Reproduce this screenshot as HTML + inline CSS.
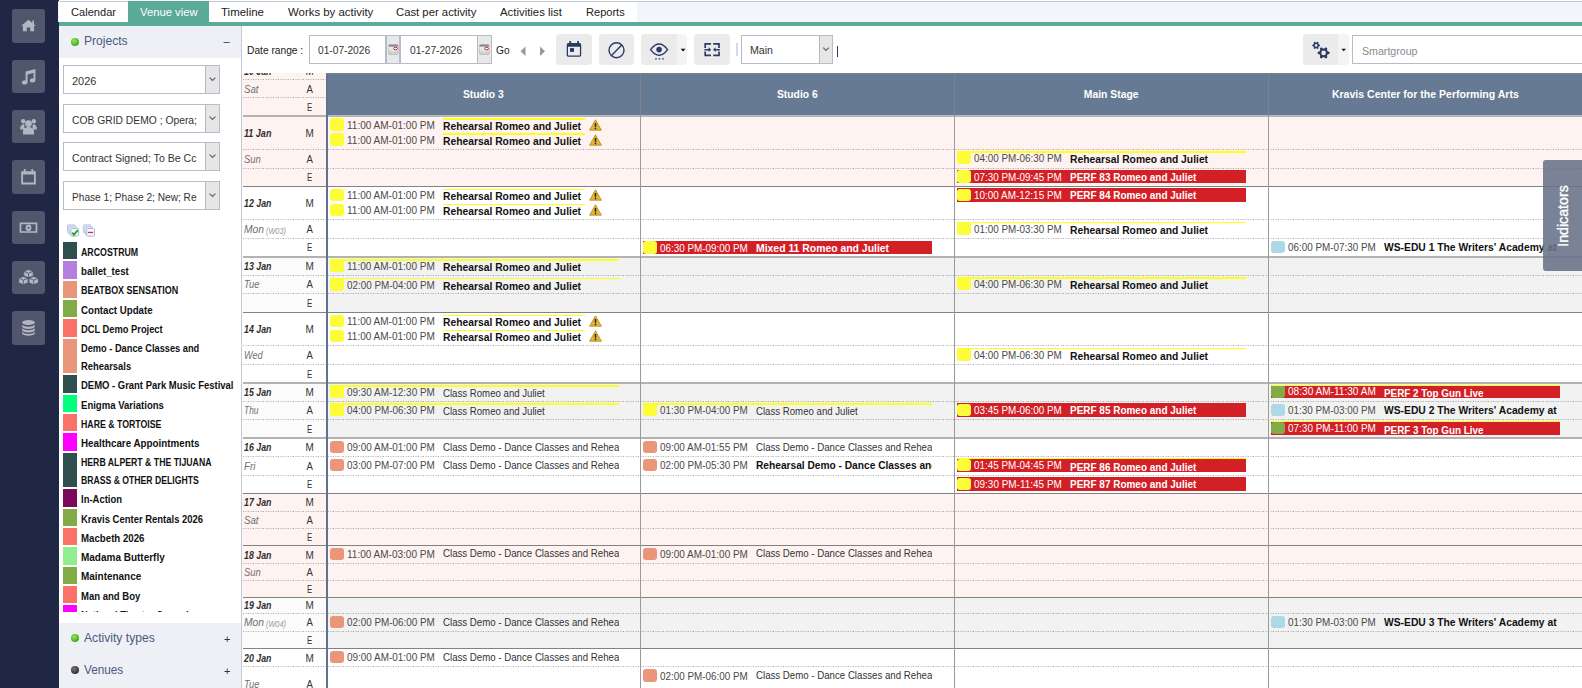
<!DOCTYPE html><html><head><meta charset="utf-8"><title>Venue view</title><style>
*{box-sizing:border-box;margin:0;padding:0}
html,body{width:1582px;height:688px;overflow:hidden;background:#fff}
body{font-family:"Liberation Sans",sans-serif;font-size:11px;color:#333;position:relative}
.abs{position:absolute}
.nav{left:0;top:0;width:58.7px;height:688px;background:#202744}
.nb{position:absolute;left:12px;width:33px;height:33.5px;background:#50566c;border-radius:3px}
.nb svg{position:absolute;left:0;top:0}
.tabbar{left:58px;top:1px;width:1524px;height:21px;background:#f2f5fa;border-top:1px solid #c3c9d6}
.tabs{left:59px;top:2px;width:578px;height:20px;background:#fff}
.tabline{left:59px;top:22px;width:1523px;height:3.5px;background:#5aab97}
.tab{position:absolute;top:2.3px;height:20px;line-height:20px;color:#222;white-space:nowrap}
.tab.on{background:#5aab97;color:#fff;top:1px;height:22px;line-height:22px}
.lp{left:59px;top:26px;width:182px;height:662px;background:#fff}
.lpb{left:241.4px;top:26px;width:1.1px;height:662px;background:#c3cad8}
.ph{position:absolute;left:59px;width:182px;background:#eef0f5}
.pt{position:absolute;left:84.4px;color:#4a5a7e;white-space:nowrap}
.dot{position:absolute;left:70.5px;width:8px;height:8px;border-radius:50%}
.pm{position:absolute;left:224px;font-size:11px;color:#333}
.dd{position:absolute;left:63px;width:156.5px;height:29px;border:1px solid #b5bccb;background:#fff}
.dd .t{position:absolute;left:8.3px;top:1.7px;line-height:27px;color:#333;white-space:nowrap;overflow:hidden;width:126px}
.dd .a{position:absolute;right:0;top:0;width:14px;height:27px;background:#e6e6e6;border-left:1px solid #b9b9b9}
.sw{position:absolute;left:63px;width:14px}
.pl{position:absolute;left:81.4px;color:#111;white-space:nowrap;line-height:17.5px}
.ln{position:absolute;height:1px}
.dl{left:243px;width:1339px;background:linear-gradient(90deg,rgba(0,0,0,.30) 0 1px,transparent 1px 2px,rgba(0,0,0,.15) 2px 4px,rgba(0,0,0,.09) 4px 5px);background-size:5px 1px}
.dt{position:absolute;left:243.8px;white-space:nowrap;line-height:13px}
.mae{position:absolute;left:300px;width:20px;text-align:center;font-size:9.8px;color:#333;line-height:13px}
.hd{left:326px;top:73px;width:1256px;height:42.5px;background:#667a93}
.ht{position:absolute;top:73px;height:42px;line-height:43px;text-align:center;width:314px;color:#fff;white-space:nowrap}
.ev{position:absolute;width:288.5px;height:14px;white-space:nowrap;overflow:hidden}
.ev .s{position:absolute;left:0;top:0;width:14px;height:12.4px;border-radius:3px}
.ev .tm{position:absolute;left:17px;line-height:13px;color:#4a4a4a}
.ev .ti{position:absolute;left:113px;line-height:13px;color:#333}
.ev.b .ti{color:#111}
.ev.r .tm,.ev.r .ti{color:#fff}
.rb{position:absolute;width:288.5px;height:13.3px;background:#d32027}
.yl{position:absolute;height:1.7px;background:#ffff1e}
.tb{position:absolute;top:34.2px;height:30.5px;background:#ebebeb;border-radius:4px}
.inp{position:absolute;top:35px;height:29px;border:1px solid #b5bccb;background:#fff;line-height:29.5px;color:#333;white-space:nowrap}
.t11{position:absolute;color:#222;white-space:nowrap;line-height:13px}
</style></head><body>
<div class="abs nav"></div>
<div class="nb" style="top:9.3px"><svg width="33" height="33.5" viewBox="0 0 33 33.5"><g transform="translate(16.5 16.75) scale(1) translate(-16.5 -16.75)"><path d="M16.5 10.8 L9.2 16.8 L10.9 16.8 L10.9 22.3 L14.8 22.3 L14.8 18.6 L18.2 18.6 L18.2 22.3 L22.1 22.3 L22.1 16.8 L23.8 16.8 L22 15.3 L22 11.6 L20.3 11.6 L20.3 13.9 Z" fill="#b2b6c2"/></g></svg></div>
<div class="nb" style="top:59.6px"><svg width="33" height="33.5" viewBox="0 0 33 33.5"><g transform="translate(16.5 16.75) scale(1) translate(-16.5 -16.75)"><path d="M13.6 11.4 L23.4 9 L23.4 20.4 A2.8 2.1 0 1 1 21.5 18.4 L21.5 13 L15.5 14.5 L15.5 22.4 A2.8 2.1 0 1 1 13.6 20.4 Z" fill="#b2b6c2"/></g></svg></div>
<div class="nb" style="top:109.9px"><svg width="33" height="33.5" viewBox="0 0 33 33.5"><g transform="translate(16.5 16.75) scale(1) translate(-16.5 -16.75)"><g fill="#b2b6c2"><circle cx="11.2" cy="11.3" r="2.2"/><circle cx="21.8" cy="11.3" r="2.2"/><circle cx="16.5" cy="13.6" r="3.4"/><path d="M8.2 19.5 A3.2 4.2 0 0 1 12.4 14.6 L12.4 19.5 Z"/><path d="M24.8 19.5 A3.2 4.2 0 0 0 20.6 14.6 L20.6 19.5 Z"/><path d="M11 24.6 L11 21 A5.5 4 0 0 1 22 21 L22 24.6 Z"/></g></g></svg></div>
<div class="nb" style="top:160.2px"><svg width="33" height="33.5" viewBox="0 0 33 33.5"><g transform="translate(16.5 16.75) scale(1.16) translate(-16.5 -16.75)"><path d="M10.2 12 H22.8 V23.4 H10.2 Z M11.8 14.8 V21.8 H21.2 V14.8 Z M12.4 10 h1.6 v2 h-1.6 Z M19 10 h1.6 v2 h-1.6 Z" fill="#b2b6c2" fill-rule="evenodd"/></g></svg></div>
<div class="nb" style="top:210.5px"><svg width="33" height="33.5" viewBox="0 0 33 33.5"><g transform="translate(16.5 16.75) scale(1.15) translate(-16.5 -16.75)"><path d="M8.8 12.2 H24.2 V21.2 H8.8 Z M10.3 13.7 V19.7 H22.7 V13.7 Z" fill="#b2b6c2" fill-rule="evenodd"/><ellipse cx="16.5" cy="16.7" rx="2.5" ry="2.8" fill="#b2b6c2"/><circle cx="16.5" cy="16.7" r="0.9" fill="#4c5269"/></g></svg></div>
<div class="nb" style="top:260.8px"><svg width="33" height="33.5" viewBox="0 0 33 33.5"><g transform="translate(16.5 16.75) scale(1.15) translate(-16.5 -16.75)"><g fill="#b2b6c2" stroke="#4c5269" stroke-width="0.7"><path d="M16.5 9.6 L20.6 11.2 L20.6 15.2 L16.5 16.8 L12.4 15.2 L12.4 11.2 Z"/><path d="M12 15.6 L16.1 17.2 L16.1 21.2 L12 22.8 L7.9 21.2 L7.9 17.2 Z"/><path d="M21 15.6 L25.1 17.2 L25.1 21.2 L21 22.8 L16.9 21.2 L16.9 17.2 Z"/><path d="M12.4 11.2 L16.5 12.8 L20.6 11.2 M16.5 12.8 V16.8 M7.9 17.2 L12 18.8 L16.1 17.2 M12 18.8 V22.8 M16.9 17.2 L21 18.8 L25.1 17.2 M21 18.8 V22.8" fill="none"/></g></g></svg></div>
<div class="nb" style="top:311.1px"><svg width="33" height="33.5" viewBox="0 0 33 33.5"><g transform="translate(16.5 16.75) scale(1.05) translate(-16.5 -16.75)"><g fill="#b2b6c2"><ellipse cx="16.5" cy="11.8" rx="6" ry="2.4"/><path d="M10.5 13.4 A6 2.4 0 0 0 22.5 13.4 V15.5 A6 2.4 0 0 1 10.5 15.5 Z"/><path d="M10.5 16.8 A6 2.4 0 0 0 22.5 16.8 V18.9 A6 2.4 0 0 1 10.5 18.9 Z"/><path d="M10.5 20.2 A6 2.4 0 0 0 22.5 20.2 V22 A6 2.4 0 0 1 10.5 22 Z"/></g></g></svg></div>
<div class="abs tabbar"></div><div class="abs tabs"></div>
<div class="tab" style="left:71.3px"><span style="display:inline-block;white-space:pre;font-size:11.2px;transform-origin:left center;transform:scaleX(0.991)">Calendar</span></div>
<div class="tab on" style="left:128.2px;width:80.8px"></div><div class="tab" style="left:140.3px;color:#fff"><span style="display:inline-block;white-space:pre;font-size:11.2px;transform-origin:left center;transform:scaleX(1.008)">Venue view</span></div>
<div class="tab" style="left:221.2px"><span style="display:inline-block;white-space:pre;font-size:11.2px;transform-origin:left center;transform:scaleX(1.027)">Timeline</span></div>
<div class="tab" style="left:287.7px"><span style="display:inline-block;white-space:pre;font-size:11.2px;transform-origin:left center;transform:scaleX(1.019)">Works by activity</span></div>
<div class="tab" style="left:396px"><span style="display:inline-block;white-space:pre;font-size:11.2px;transform-origin:left center;transform:scaleX(1.010)">Cast per activity</span></div>
<div class="tab" style="left:500.4px"><span style="display:inline-block;white-space:pre;font-size:11.2px;transform-origin:left center;transform:scaleX(1.016)">Activities list</span></div>
<div class="tab" style="left:586.3px"><span style="display:inline-block;white-space:pre;font-size:11.2px;transform-origin:left center;transform:scaleX(0.988)">Reports</span></div>
<div class="abs tabline"></div>
<div class="abs lp"></div><div class="abs lpb"></div>
<div class="ph" style="top:26px;height:31.5px"></div>
<div class="dot" style="top:37.7px;background:radial-gradient(circle at 40% 35%,#9be35a,#3fae1c 70%)"></div>
<div class="pt" style="top:34px"><span style="display:inline-block;white-space:pre;font-size:12.4px;transform-origin:left center;transform:scaleX(0.974)">Projects</span></div>
<div class="pm" style="top:35px;left:223.5px">&#8211;</div>
<div class="dd" style="top:65px"><div class="t"><span style="display:inline-block;white-space:pre;font-size:10.9px;transform-origin:left center;transform:scaleX(1.003)">2026</span></div><div class="a"><svg width="13" height="26" viewBox="0 0 13 26"><path d="M3.6 11.6 L6.5 14.4 L9.4 11.6" fill="none" stroke="#666" stroke-width="1.3"/></svg></div></div>
<div class="dd" style="top:104px"><div class="t"><span style="display:inline-block;white-space:pre;font-size:10.9px;transform-origin:left center;transform:scaleX(0.947)">COB GRID DEMO ; Opera;</span></div><div class="a"><svg width="13" height="26" viewBox="0 0 13 26"><path d="M3.6 11.6 L6.5 14.4 L9.4 11.6" fill="none" stroke="#666" stroke-width="1.3"/></svg></div></div>
<div class="dd" style="top:142px"><div class="t"><span style="display:inline-block;white-space:pre;font-size:10.9px;transform-origin:left center;transform:scaleX(0.972)">Contract Signed; To Be Cc</span></div><div class="a"><svg width="13" height="26" viewBox="0 0 13 26"><path d="M3.6 11.6 L6.5 14.4 L9.4 11.6" fill="none" stroke="#666" stroke-width="1.3"/></svg></div></div>
<div class="dd" style="top:181px"><div class="t"><span style="display:inline-block;white-space:pre;font-size:10.9px;transform-origin:left center;transform:scaleX(0.931)">Phase 1; Phase 2; New; Re</span></div><div class="a"><svg width="13" height="26" viewBox="0 0 13 26"><path d="M3.6 11.6 L6.5 14.4 L9.4 11.6" fill="none" stroke="#666" stroke-width="1.3"/></svg></div></div>
<svg class="abs" style="left:66px;top:224px" width="32" height="14" viewBox="0 0 32 14"><rect x="1.4" y="0.8" width="7.6" height="7.8" rx="0.8" fill="#dfe7f5" stroke="#b3c5e3" stroke-width="0.9"/><rect x="3" y="2.6" width="7.6" height="7.8" rx="0.8" fill="#e6edf8" stroke="#b3c5e3" stroke-width="0.9"/><rect x="4.8" y="4.5" width="7.7" height="7.6" rx="0.8" fill="#fbfcfe" stroke="#9fb6dc" stroke-width="1"/><path d="M6.2 8.6 L8 10.8 L11.8 6.2" fill="none" stroke="#25a325" stroke-width="1.9"/><rect x="17.3" y="0.8" width="7.6" height="7.8" rx="0.8" fill="#dfe7f5" stroke="#b3c5e3" stroke-width="0.9"/><rect x="18.9" y="2.6" width="7.6" height="7.8" rx="0.8" fill="#e6edf8" stroke="#b3c5e3" stroke-width="0.9"/><rect x="20.7" y="4.5" width="7.7" height="7.6" rx="0.8" fill="#fbfcfe" stroke="#9fb6dc" stroke-width="1"/><rect x="21.9" y="7.8" width="5.2" height="1.3" fill="#e0202c"/></svg>
<div class="abs" style="left:59px;top:240px;width:182px;height:371.8px;overflow:hidden"><div style="position:absolute;left:-59px;top:-240px">
<div class="sw" style="top:242.1px;height:17.4px;background:#2f4f4f"></div>
<div class="pl" style="top:243.9px"><span style="display:inline-block;white-space:pre;font-size:10px;font-weight:bold;transform-origin:left center;transform:scaleX(0.880)">ARCOSTRUM</span></div>
<div class="sw" style="top:261.4px;height:17.4px;background:#b47fe0"></div>
<div class="pl" style="top:263.2px"><span style="display:inline-block;white-space:pre;font-size:10px;font-weight:bold;transform-origin:left center;transform:scaleX(0.966)">ballet_test</span></div>
<div class="sw" style="top:280.7px;height:17.4px;background:#e9967a"></div>
<div class="pl" style="top:282.4px"><span style="display:inline-block;white-space:pre;font-size:10px;font-weight:bold;transform-origin:left center;transform:scaleX(0.895)">BEATBOX SENSATION</span></div>
<div class="sw" style="top:300.0px;height:17.4px;background:#82aa46"></div>
<div class="pl" style="top:301.8px"><span style="display:inline-block;white-space:pre;font-size:10px;font-weight:bold;transform-origin:left center;transform:scaleX(0.969)">Contact Update</span></div>
<div class="sw" style="top:319.3px;height:17.4px;background:#fa7268"></div>
<div class="pl" style="top:321.1px"><span style="display:inline-block;white-space:pre;font-size:10px;font-weight:bold;transform-origin:left center;transform:scaleX(0.932)">DCL Demo Project</span></div>
<div class="sw" style="top:338.6px;height:34.9px;background:#e9967a"></div>
<div class="pl" style="top:340.4px"><span style="display:inline-block;white-space:pre;font-size:10px;font-weight:bold;transform-origin:left center;transform:scaleX(0.925)">Demo - Dance Classes and</span><br><span style="display:inline-block;white-space:pre;font-size:10px;font-weight:bold;transform-origin:left center;transform:scaleX(0.939)">Rehearsals</span></div>
<div class="sw" style="top:375.4px;height:17.4px;background:#2f4f4f"></div>
<div class="pl" style="top:377.2px"><span style="display:inline-block;white-space:pre;font-size:10px;font-weight:bold;transform-origin:left center;transform:scaleX(0.946)">DEMO - Grant Park Music Festival</span></div>
<div class="sw" style="top:394.7px;height:17.4px;background:#00ff7f"></div>
<div class="pl" style="top:396.5px"><span style="display:inline-block;white-space:pre;font-size:10px;font-weight:bold;transform-origin:left center;transform:scaleX(0.956)">Enigma Variations</span></div>
<div class="sw" style="top:414.0px;height:17.4px;background:#fa7268"></div>
<div class="pl" style="top:415.8px"><span style="display:inline-block;white-space:pre;font-size:10px;font-weight:bold;transform-origin:left center;transform:scaleX(0.875)">HARE &amp; TORTOISE</span></div>
<div class="sw" style="top:433.3px;height:17.4px;background:#ff00ff"></div>
<div class="pl" style="top:435.1px"><span style="display:inline-block;white-space:pre;font-size:10px;font-weight:bold;transform-origin:left center;transform:scaleX(0.980)">Healthcare Appointments</span></div>
<div class="sw" style="top:452.6px;height:34.9px;background:#2f4f4f"></div>
<div class="pl" style="top:454.4px"><span style="display:inline-block;white-space:pre;font-size:10px;font-weight:bold;transform-origin:left center;transform:scaleX(0.872)">HERB ALPERT &amp; THE TIJUANA</span><br><span style="display:inline-block;white-space:pre;font-size:10px;font-weight:bold;transform-origin:left center;transform:scaleX(0.865)">BRASS &amp; OTHER DELIGHTS</span></div>
<div class="sw" style="top:489.4px;height:17.4px;background:#7b0a5c"></div>
<div class="pl" style="top:491.2px"><span style="display:inline-block;white-space:pre;font-size:10px;font-weight:bold;transform-origin:left center;transform:scaleX(0.946)">In-Action</span></div>
<div class="sw" style="top:508.7px;height:17.4px;background:#82aa46"></div>
<div class="pl" style="top:510.5px"><span style="display:inline-block;white-space:pre;font-size:10px;font-weight:bold;transform-origin:left center;transform:scaleX(0.947)">Kravis Center Rentals 2026</span></div>
<div class="sw" style="top:528.0px;height:17.4px;background:#fa7268"></div>
<div class="pl" style="top:529.8px"><span style="display:inline-block;white-space:pre;font-size:10px;font-weight:bold;transform-origin:left center;transform:scaleX(0.968)">Macbeth 2026</span></div>
<div class="sw" style="top:547.3px;height:17.4px;background:#90ee90"></div>
<div class="pl" style="top:549.0px"><span style="display:inline-block;white-space:pre;font-size:10px;font-weight:bold;transform-origin:left center;transform:scaleX(0.998)">Madama Butterfly</span></div>
<div class="sw" style="top:566.6px;height:17.4px;background:#82aa46"></div>
<div class="pl" style="top:568.3px"><span style="display:inline-block;white-space:pre;font-size:10px;font-weight:bold;transform-origin:left center;transform:scaleX(0.994)">Maintenance</span></div>
<div class="sw" style="top:585.9px;height:17.4px;background:#fa7268"></div>
<div class="pl" style="top:587.6px"><span style="display:inline-block;white-space:pre;font-size:10px;font-weight:bold;transform-origin:left center;transform:scaleX(0.954)">Man and Boy</span></div>
<div class="sw" style="top:605.2px;height:17.4px;background:#ff00ff"></div>
<div class="pl" style="top:606.9px"><span style="display:inline-block;white-space:pre;font-size:10px;font-weight:bold;transform-origin:left center;transform:scaleX(0.927)">National Theatre Greenday</span></div>
</div></div>
<div class="ph" style="top:622.7px;height:66px"></div>
<div class="dot" style="top:634.3px;background:radial-gradient(circle at 40% 35%,#9be35a,#3fae1c 70%)"></div>
<div class="pt" style="top:630.6px"><span style="display:inline-block;white-space:pre;font-size:12.4px;transform-origin:left center;transform:scaleX(0.979)">Activity types</span></div>
<div class="pm" style="top:632.5px">+</div>
<div class="dot" style="top:666.3px;background:radial-gradient(circle at 40% 35%,#777,#333 70%)"></div>
<div class="pt" style="top:663.2px"><span style="display:inline-block;white-space:pre;font-size:12.4px;transform-origin:left center;transform:scaleX(0.948)">Venues</span></div>
<div class="pm" style="top:664.5px">+</div>
<div class="t11" style="left:246.5px;top:44px"><span style="display:inline-block;white-space:pre;font-size:10.8px;transform-origin:left center;transform:scaleX(0.946)">Date range :</span></div>
<div class="inp" style="left:308.5px;width:77.5px;padding-left:8.2px"><span style="display:inline-block;white-space:pre;font-size:10.8px;transform-origin:left center;transform:scaleX(0.943)">01-07-2026</span></div><div class="abs" style="left:385.5px;top:35px;width:14.5px;height:29px;background:#e8e8e8;border:1px solid #b5bccb;border-left:1px solid #b9b9b9"></div><svg class="abs" style="left:387.5px;top:44px" width="11" height="11" viewBox="0 0 11 11"><defs><linearGradient id="cg385" x1="0" y1="0" x2="0" y2="1"><stop offset="0" stop-color="#fff"/><stop offset="1" stop-color="#c4c4c4"/></linearGradient></defs><rect x="0.3" y="0.5" width="10" height="10" rx="1.5" fill="url(#cg385)" stroke="#b5b5b5" stroke-width="0.6"/><path d="M0.6 1.6 Q0.6 0.5 1.8 0.5 H8.8 Q10 0.5 10 1.6 V2.8 H0.6 Z" fill="#8d8d8d"/><path d="M1 6.2 H9.6 M5 3.2 V10" stroke="#e6e6e6" stroke-width="0.8"/><ellipse cx="7.6" cy="4.5" rx="1.9" ry="1.25" fill="#fff" stroke="#c8222a" stroke-width="1"/></svg>
<div class="inp" style="left:400px;width:77.5px;padding-left:8.7px"><span style="display:inline-block;white-space:pre;font-size:10.8px;transform-origin:left center;transform:scaleX(0.943)">01-27-2026</span></div><div class="abs" style="left:477px;top:35px;width:14.5px;height:29px;background:#e8e8e8;border:1px solid #b5bccb;border-left:1px solid #b9b9b9"></div><svg class="abs" style="left:479px;top:44px" width="11" height="11" viewBox="0 0 11 11"><defs><linearGradient id="cg477" x1="0" y1="0" x2="0" y2="1"><stop offset="0" stop-color="#fff"/><stop offset="1" stop-color="#c4c4c4"/></linearGradient></defs><rect x="0.3" y="0.5" width="10" height="10" rx="1.5" fill="url(#cg477)" stroke="#b5b5b5" stroke-width="0.6"/><path d="M0.6 1.6 Q0.6 0.5 1.8 0.5 H8.8 Q10 0.5 10 1.6 V2.8 H0.6 Z" fill="#8d8d8d"/><path d="M1 6.2 H9.6 M5 3.2 V10" stroke="#e6e6e6" stroke-width="0.8"/><ellipse cx="7.6" cy="4.5" rx="1.9" ry="1.25" fill="#fff" stroke="#c8222a" stroke-width="1"/></svg>
<div class="t11" style="left:495.6px;top:43.7px"><span style="display:inline-block;white-space:pre;font-size:10.8px;transform-origin:left center;transform:scaleX(0.944)">Go</span></div>
<svg class="abs" style="left:518px;top:44px" width="32" height="14" viewBox="0 0 32 14"><path d="M7.5 2.5 L2.5 7.3 L7.5 12 Z M22 2.5 L27 7.3 L22 12 Z" fill="#9a9a9a"/></svg>
<div class="tb" style="left:556px;width:35.6px"></div>
<svg class="abs" style="left:565px;top:40px" width="18" height="18" viewBox="0 0 18 18"><rect x="2.35" y="3.75" width="13.2" height="12.4" rx="1.2" fill="none" stroke="#2e3a66" stroke-width="1.3"/><rect x="2.35" y="3.75" width="13.2" height="3" fill="#2e3a66"/><rect x="4.3" y="1" width="1.8" height="3" fill="#2e3a66"/><rect x="12.2" y="1" width="1.8" height="3" fill="#2e3a66"/><rect x="5" y="8.1" width="4" height="3.8" fill="#2e3a66"/></svg>
<div class="tb" style="left:598.7px;width:35.4px"></div>
<svg class="abs" style="left:607px;top:40.5px" width="19" height="19" viewBox="0 0 19 19"><circle cx="9.5" cy="9.3" r="7.5" fill="none" stroke="#2e3a66" stroke-width="1.4"/><path d="M4.3 14.7 L14.7 3.9" stroke="#2e3a66" stroke-width="1.4"/></svg>
<div class="tb" style="left:641.2px;width:45.5px;background:#f4f4f4"></div><div class="tb" style="left:641.2px;width:35.7px;border-radius:4px 0 0 4px"></div>
<svg class="abs" style="left:648px;top:40px" width="22" height="21" viewBox="0 0 22 21"><path d="M2.6 9.6 Q11.1 -1.6 19.6 9.6 Q11.1 20.8 2.6 9.6 Z" fill="none" stroke="#2e3a66" stroke-width="1.4"/><circle cx="11.1" cy="9.6" r="2.8" fill="#2e3a66"/><path d="M7.2 18.9 h1.6 M10.7 18.9 h1.6 M14.2 18.9 h1.6" stroke="#2e3a66" stroke-width="1.3"/></svg>
<svg class="abs" style="left:679.5px;top:47.8px" width="7" height="5" viewBox="0 0 7 5"><path d="M0.6 0.7 H5.6 L3.1 3.4 Z" fill="#111"/></svg>
<div class="tb" style="left:694px;width:35.7px"></div>
<svg class="abs" style="left:703px;top:41px" width="18" height="18" viewBox="0 0 18 18"><path d="M8 2.9 H2.2 V7 M10.2 2.9 H16 V7 M8 14.3 H2.2 V10.4 M10.2 14.3 H16 V10.4" fill="none" stroke="#2e3a66" stroke-width="1.7"/><path d="M1.4 8.7 H6 M16.8 8.7 H12.2" stroke="#2e3a66" stroke-width="1.5"/><path d="M5.6 6.3 L8.2 8.7 L5.6 11.1 Z M12.6 6.3 L10 8.7 L12.6 11.1 Z" fill="#2e3a66"/></svg>
<div class="abs" style="left:736.2px;top:43px;width:1.7px;height:13px;background:#d6dbe5"></div>
<div class="inp" style="left:741px;width:91.5px;padding-left:8.2px"><span style="display:inline-block;white-space:pre;font-size:10.8px;transform-origin:left center;transform:scaleX(0.983)">Main</span></div>
<div class="abs" style="left:818.5px;top:36px;width:13px;height:27px;background:#e6e6e6;border-left:1px solid #b9b9b9"><svg width="12" height="26" viewBox="0 0 12 26"><path d="M3.2 11.6 L6 14.4 L8.8 11.6" fill="none" stroke="#666" stroke-width="1.3"/></svg></div>
<div class="abs" style="left:836.6px;top:46px;width:1.4px;height:10.5px;background:#2e3a66"></div>
<div class="tb" style="left:1302.6px;top:34.3px;height:30.3px;width:46px;background:#f4f4f4"></div><div class="tb" style="left:1302.6px;top:34.3px;height:30.3px;width:35.4px;border-radius:4px 0 0 4px"></div>
<svg class="abs" style="left:1310px;top:39px" width="22" height="22" viewBox="0 0 22 22"><path d="M9.97 5.89 L9.97 6.91 L8.69 7.47 L8.33 8.11 L8.47 9.49 L7.59 10.00 L6.47 9.18 L5.73 9.18 L4.61 10.00 L3.73 9.49 L3.87 8.11 L3.51 7.47 L2.23 6.91 L2.23 5.89 L3.51 5.33 L3.87 4.69 L3.73 3.31 L4.61 2.80 L5.73 3.62 L6.47 3.62 L7.59 2.80 L8.47 3.31 L8.33 4.69 L8.69 5.33 Z M7.45 6.40 A1.35 1.35 0 1 0 4.75 6.40 A1.35 1.35 0 1 0 7.45 6.40 Z" fill="#2e3a66" fill-rule="evenodd"/><path d="M19.55 13.12 L19.55 14.68 L17.59 15.55 L17.03 16.53 L17.25 18.66 L15.90 19.44 L14.16 18.18 L13.04 18.18 L11.30 19.44 L9.95 18.66 L10.17 16.53 L9.61 15.55 L7.65 14.68 L7.65 13.12 L9.61 12.25 L10.17 11.27 L9.95 9.14 L11.30 8.36 L13.04 9.62 L14.16 9.62 L15.90 8.36 L17.25 9.14 L17.03 11.27 L17.59 12.25 Z M15.90 13.90 A2.3 2.3 0 1 0 11.30 13.90 A2.3 2.3 0 1 0 15.90 13.90 Z" fill="#2e3a66" fill-rule="evenodd"/></svg>
<svg class="abs" style="left:1341.3px;top:47.8px" width="7" height="5" viewBox="0 0 7 5"><path d="M0.5 0.7 H4.9 L2.7 3.2 Z" fill="#111"/></svg>
<div class="inp" style="left:1352px;width:240px;padding-left:8.7px;color:#8a8a8a;line-height:30px"><span style="display:inline-block;white-space:pre;font-size:10.6px;transform-origin:left center;transform:scaleX(1.003)">Smartgroup</span></div>
<div class="abs" style="left:242px;top:73px;width:1340px;height:615px;overflow:hidden"><div style="position:absolute;left:-242px;top:-73px;width:1582px;height:688px">
<div class="abs" style="left:242px;top:62px;width:84px;height:53.5px;background:#fff3f2"></div>
<div class="abs" style="left:326px;top:62px;width:1256px;height:53.5px;background:#fff3f2"></div>
<div class="ln dl" style="top:79px"></div>
<div class="ln dl" style="top:97px"></div>
<div class="ln" style="left:243px;top:62px;width:1339px;background:#828282"></div>
<div class="dt" style="top:65.2px;color:#2e2e2e"><span style="display:inline-block;white-space:pre;font-size:11px;font-weight:bold;font-style:italic;transform-origin:left center;transform:scaleX(0.800)">10 Jan</span></div>
<div class="dt" style="top:82.9px"><span style="display:inline-block;white-space:pre;font-size:11px;font-style:italic;color:#6f6f6f;transform-origin:left center;transform:scaleX(0.878)">Sat</span></div>
<div class="mae" style="top:65.2px"><span style="display:inline-block;white-space:pre;font-size:11px;transform-origin:center center;transform:scaleX(0.905)">M</span></div><div class="mae" style="top:82.9px"><span style="display:inline-block;white-space:pre;font-size:11px;transform-origin:center center;transform:scaleX(0.871)">A</span></div><div class="mae" style="top:100.9px"><span style="display:inline-block;white-space:pre;font-size:11px;transform-origin:center center;transform:scaleX(0.722)">E</span></div>
<div class="abs" style="left:242px;top:115.5px;width:84px;height:70.5px;background:#fff3f2"></div>
<div class="abs" style="left:326px;top:115.5px;width:1256px;height:70.5px;background:#fff3f2"></div>
<div class="ln dl" style="top:149px"></div>
<div class="ln dl" style="top:168px"></div>
<div class="ln" style="left:243px;top:115px;width:1339px;height:2px;background:#b2b2b2"></div>
<div class="dt" style="top:126.7px;color:#2e2e2e"><span style="display:inline-block;white-space:pre;font-size:11px;font-weight:bold;font-style:italic;transform-origin:left center;transform:scaleX(0.819)">11 Jan</span></div>
<div class="dt" style="top:152.9px"><span style="display:inline-block;white-space:pre;font-size:11px;font-style:italic;color:#6f6f6f;transform-origin:left center;transform:scaleX(0.856)">Sun</span></div>
<div class="mae" style="top:126.7px"><span style="display:inline-block;white-space:pre;font-size:11px;transform-origin:center center;transform:scaleX(0.905)">M</span></div><div class="mae" style="top:152.9px"><span style="display:inline-block;white-space:pre;font-size:11px;transform-origin:center center;transform:scaleX(0.871)">A</span></div><div class="mae" style="top:171.4px"><span style="display:inline-block;white-space:pre;font-size:11px;transform-origin:center center;transform:scaleX(0.722)">E</span></div>
<div class="abs" style="left:242px;top:186px;width:84px;height:70px;background:#ffffff"></div>
<div class="abs" style="left:326px;top:186px;width:1256px;height:70px;background:#ffffff"></div>
<div class="ln dl" style="top:219px"></div>
<div class="ln dl" style="top:238px"></div>
<div class="ln" style="left:243px;top:186px;width:1339px;background:#828282"></div>
<div class="dt" style="top:197.2px;color:#2e2e2e"><span style="display:inline-block;white-space:pre;font-size:11px;font-weight:bold;font-style:italic;transform-origin:left center;transform:scaleX(0.800)">12 Jan</span></div>
<div class="dt" style="top:223.2px"><span style="display:inline-block;white-space:pre;font-size:11px;font-style:italic;color:#6f6f6f;transform-origin:left center;transform:scaleX(0.934)">Mon</span></div>
<div class="dt" style="left:266.2px;top:223.6px"><span style="display:inline-block;white-space:pre;font-size:8.6px;font-style:italic;color:#9a9a9a;transform-origin:left center;transform:scaleX(0.854)">(W03)</span></div>
<div class="mae" style="top:197.2px"><span style="display:inline-block;white-space:pre;font-size:11px;transform-origin:center center;transform:scaleX(0.905)">M</span></div><div class="mae" style="top:223.2px"><span style="display:inline-block;white-space:pre;font-size:11px;transform-origin:center center;transform:scaleX(0.871)">A</span></div><div class="mae" style="top:241.4px"><span style="display:inline-block;white-space:pre;font-size:11px;transform-origin:center center;transform:scaleX(0.722)">E</span></div>
<div class="abs" style="left:242px;top:256px;width:84px;height:56px;background:#fbfbfb"></div>
<div class="abs" style="left:326px;top:256px;width:1256px;height:56px;background:#f2f2f2"></div>
<div class="ln dl" style="top:275px"></div>
<div class="ln dl" style="top:293px"></div>
<div class="ln" style="left:243px;top:256px;width:1339px;height:2px;background:#b2b2b2"></div>
<div class="dt" style="top:259.9px;color:#2e2e2e"><span style="display:inline-block;white-space:pre;font-size:11px;font-weight:bold;font-style:italic;transform-origin:left center;transform:scaleX(0.800)">13 Jan</span></div>
<div class="dt" style="top:278.4px"><span style="display:inline-block;white-space:pre;font-size:11px;font-style:italic;color:#6f6f6f;transform-origin:left center;transform:scaleX(0.854)">Tue</span></div>
<div class="mae" style="top:259.9px"><span style="display:inline-block;white-space:pre;font-size:11px;transform-origin:center center;transform:scaleX(0.905)">M</span></div><div class="mae" style="top:278.4px"><span style="display:inline-block;white-space:pre;font-size:11px;transform-origin:center center;transform:scaleX(0.871)">A</span></div><div class="mae" style="top:296.9px"><span style="display:inline-block;white-space:pre;font-size:11px;transform-origin:center center;transform:scaleX(0.722)">E</span></div>
<div class="abs" style="left:242px;top:312px;width:84px;height:70.5px;background:#ffffff"></div>
<div class="abs" style="left:326px;top:312px;width:1256px;height:70.5px;background:#ffffff"></div>
<div class="ln dl" style="top:345px"></div>
<div class="ln dl" style="top:364px"></div>
<div class="ln" style="left:243px;top:312px;width:1339px;background:#828282"></div>
<div class="dt" style="top:323.1px;color:#2e2e2e"><span style="display:inline-block;white-space:pre;font-size:11px;font-weight:bold;font-style:italic;transform-origin:left center;transform:scaleX(0.800)">14 Jan</span></div>
<div class="dt" style="top:349.1px"><span style="display:inline-block;white-space:pre;font-size:11px;font-style:italic;color:#6f6f6f;transform-origin:left center;transform:scaleX(0.825)">Wed</span></div>
<div class="mae" style="top:323.1px"><span style="display:inline-block;white-space:pre;font-size:11px;transform-origin:center center;transform:scaleX(0.905)">M</span></div><div class="mae" style="top:349.1px"><span style="display:inline-block;white-space:pre;font-size:11px;transform-origin:center center;transform:scaleX(0.871)">A</span></div><div class="mae" style="top:367.6px"><span style="display:inline-block;white-space:pre;font-size:11px;transform-origin:center center;transform:scaleX(0.722)">E</span></div>
<div class="abs" style="left:242px;top:382.5px;width:84px;height:55.5px;background:#fbfbfb"></div>
<div class="abs" style="left:326px;top:382.5px;width:1256px;height:55.5px;background:#f2f2f2"></div>
<div class="ln dl" style="top:401px"></div>
<div class="ln dl" style="top:419px"></div>
<div class="ln" style="left:243px;top:382px;width:1339px;height:2px;background:#b2b2b2"></div>
<div class="dt" style="top:386.1px;color:#2e2e2e"><span style="display:inline-block;white-space:pre;font-size:11px;font-weight:bold;font-style:italic;transform-origin:left center;transform:scaleX(0.800)">15 Jan</span></div>
<div class="dt" style="top:404.4px"><span style="display:inline-block;white-space:pre;font-size:11px;font-style:italic;color:#6f6f6f;transform-origin:left center;transform:scaleX(0.764)">Thu</span></div>
<div class="mae" style="top:386.1px"><span style="display:inline-block;white-space:pre;font-size:11px;transform-origin:center center;transform:scaleX(0.905)">M</span></div><div class="mae" style="top:404.4px"><span style="display:inline-block;white-space:pre;font-size:11px;transform-origin:center center;transform:scaleX(0.871)">A</span></div><div class="mae" style="top:422.9px"><span style="display:inline-block;white-space:pre;font-size:11px;transform-origin:center center;transform:scaleX(0.722)">E</span></div>
<div class="abs" style="left:242px;top:438px;width:84px;height:55px;background:#ffffff"></div>
<div class="abs" style="left:326px;top:438px;width:1256px;height:55px;background:#ffffff"></div>
<div class="ln dl" style="top:456px"></div>
<div class="ln dl" style="top:475px"></div>
<div class="ln" style="left:243px;top:437px;width:1339px;height:2px;background:#b2b2b2"></div>
<div class="dt" style="top:441.4px;color:#2e2e2e"><span style="display:inline-block;white-space:pre;font-size:11px;font-weight:bold;font-style:italic;transform-origin:left center;transform:scaleX(0.800)">16 Jan</span></div>
<div class="dt" style="top:459.9px"><span style="display:inline-block;white-space:pre;font-size:11px;font-style:italic;color:#6f6f6f;transform-origin:left center;transform:scaleX(0.896)">Fri</span></div>
<div class="mae" style="top:441.4px"><span style="display:inline-block;white-space:pre;font-size:11px;transform-origin:center center;transform:scaleX(0.905)">M</span></div><div class="mae" style="top:459.9px"><span style="display:inline-block;white-space:pre;font-size:11px;transform-origin:center center;transform:scaleX(0.871)">A</span></div><div class="mae" style="top:478.4px"><span style="display:inline-block;white-space:pre;font-size:11px;transform-origin:center center;transform:scaleX(0.722)">E</span></div>
<div class="abs" style="left:242px;top:493px;width:84px;height:52.5px;background:#fff3f2"></div>
<div class="abs" style="left:326px;top:493px;width:1256px;height:52.5px;background:#fff3f2"></div>
<div class="ln dl" style="top:511px"></div>
<div class="ln dl" style="top:528px"></div>
<div class="ln" style="left:243px;top:493px;width:1339px;background:#828282"></div>
<div class="dt" style="top:496.4px;color:#2e2e2e"><span style="display:inline-block;white-space:pre;font-size:11px;font-weight:bold;font-style:italic;transform-origin:left center;transform:scaleX(0.800)">17 Jan</span></div>
<div class="dt" style="top:513.9px"><span style="display:inline-block;white-space:pre;font-size:11px;font-style:italic;color:#6f6f6f;transform-origin:left center;transform:scaleX(0.878)">Sat</span></div>
<div class="mae" style="top:496.4px"><span style="display:inline-block;white-space:pre;font-size:11px;transform-origin:center center;transform:scaleX(0.905)">M</span></div><div class="mae" style="top:513.9px"><span style="display:inline-block;white-space:pre;font-size:11px;transform-origin:center center;transform:scaleX(0.871)">A</span></div><div class="mae" style="top:531.1px"><span style="display:inline-block;white-space:pre;font-size:11px;transform-origin:center center;transform:scaleX(0.722)">E</span></div>
<div class="abs" style="left:242px;top:545.5px;width:84px;height:51.5px;background:#fff3f2"></div>
<div class="abs" style="left:326px;top:545.5px;width:1256px;height:51.5px;background:#fff3f2"></div>
<div class="ln dl" style="top:563px"></div>
<div class="ln dl" style="top:580px"></div>
<div class="ln" style="left:243px;top:545px;width:1339px;background:#828282"></div>
<div class="dt" style="top:548.6px;color:#2e2e2e"><span style="display:inline-block;white-space:pre;font-size:11px;font-weight:bold;font-style:italic;transform-origin:left center;transform:scaleX(0.800)">18 Jan</span></div>
<div class="dt" style="top:565.9px"><span style="display:inline-block;white-space:pre;font-size:11px;font-style:italic;color:#6f6f6f;transform-origin:left center;transform:scaleX(0.856)">Sun</span></div>
<div class="mae" style="top:548.6px"><span style="display:inline-block;white-space:pre;font-size:11px;transform-origin:center center;transform:scaleX(0.905)">M</span></div><div class="mae" style="top:565.9px"><span style="display:inline-block;white-space:pre;font-size:11px;transform-origin:center center;transform:scaleX(0.871)">A</span></div><div class="mae" style="top:582.9px"><span style="display:inline-block;white-space:pre;font-size:11px;transform-origin:center center;transform:scaleX(0.722)">E</span></div>
<div class="abs" style="left:242px;top:597px;width:84px;height:51px;background:#fbfbfb"></div>
<div class="abs" style="left:326px;top:597px;width:1256px;height:51px;background:#f2f2f2"></div>
<div class="ln dl" style="top:613px"></div>
<div class="ln dl" style="top:631px"></div>
<div class="ln" style="left:243px;top:597px;width:1339px;background:#828282"></div>
<div class="dt" style="top:599.4px;color:#2e2e2e"><span style="display:inline-block;white-space:pre;font-size:11px;font-weight:bold;font-style:italic;transform-origin:left center;transform:scaleX(0.800)">19 Jan</span></div>
<div class="dt" style="top:616.4px"><span style="display:inline-block;white-space:pre;font-size:11px;font-style:italic;color:#6f6f6f;transform-origin:left center;transform:scaleX(0.934)">Mon</span></div>
<div class="dt" style="left:266.2px;top:616.8px"><span style="display:inline-block;white-space:pre;font-size:8.6px;font-style:italic;color:#9a9a9a;transform-origin:left center;transform:scaleX(0.854)">(W04)</span></div>
<div class="mae" style="top:599.4px"><span style="display:inline-block;white-space:pre;font-size:11px;transform-origin:center center;transform:scaleX(0.905)">M</span></div><div class="mae" style="top:616.4px"><span style="display:inline-block;white-space:pre;font-size:11px;transform-origin:center center;transform:scaleX(0.871)">A</span></div><div class="mae" style="top:633.9px"><span style="display:inline-block;white-space:pre;font-size:11px;transform-origin:center center;transform:scaleX(0.722)">E</span></div>
<div class="abs" style="left:242px;top:648px;width:84px;height:72px;background:#ffffff"></div>
<div class="abs" style="left:326px;top:648px;width:1256px;height:72px;background:#ffffff"></div>
<div class="ln dl" style="top:666px"></div>
<div class="ln dl" style="top:700px"></div>
<div class="ln" style="left:243px;top:648px;width:1339px;background:#828282"></div>
<div class="dt" style="top:651.6px;color:#2e2e2e"><span style="display:inline-block;white-space:pre;font-size:11px;font-weight:bold;font-style:italic;transform-origin:left center;transform:scaleX(0.800)">20 Jan</span></div>
<div class="dt" style="top:677.6px"><span style="display:inline-block;white-space:pre;font-size:11px;font-style:italic;color:#6f6f6f;transform-origin:left center;transform:scaleX(0.854)">Tue</span></div>
<div class="mae" style="top:651.6px"><span style="display:inline-block;white-space:pre;font-size:11px;transform-origin:center center;transform:scaleX(0.905)">M</span></div><div class="mae" style="top:677.6px"><span style="display:inline-block;white-space:pre;font-size:11px;transform-origin:center center;transform:scaleX(0.871)">A</span></div><div class="mae" style="top:704.4px"><span style="display:inline-block;white-space:pre;font-size:11px;transform-origin:center center;transform:scaleX(0.722)">E</span></div>
</div></div>
<div class="abs hd"></div>
<div class="abs" style="left:326px;top:114.5px;width:1256px;height:1.5px;background:#b9b9b9"></div>
<div class="ht" style="left:326px"><span style="display:inline-block;white-space:pre;font-size:10.3px;font-weight:bold;transform-origin:center center;transform:scaleX(1.002)">Studio 3</span></div>
<div class="ht" style="left:640px"><span style="display:inline-block;white-space:pre;font-size:10.3px;font-weight:bold;transform-origin:center center;transform:scaleX(1.002)">Studio 6</span></div>
<div class="ht" style="left:954px"><span style="display:inline-block;white-space:pre;font-size:10.3px;font-weight:bold;transform-origin:center center;transform:scaleX(1.008)">Main Stage</span></div>
<div class="ht" style="left:1268px"><span style="display:inline-block;white-space:pre;font-size:10.3px;font-weight:bold;transform-origin:center center;transform:scaleX(1.023)">Kravis Center for the Performing Arts</span></div>
<div class="abs" style="left:326px;top:73px;width:2px;height:615px;background:#5f7390"></div>
<div class="abs" style="left:640px;top:73px;width:1px;height:615px;background:#9a9a9a"></div>
<div class="abs" style="left:640px;top:73px;width:1px;height:42px;background:#7f8289"></div>
<div class="abs" style="left:954px;top:73px;width:1px;height:615px;background:#9a9a9a"></div>
<div class="abs" style="left:954px;top:73px;width:1px;height:42px;background:#7f8289"></div>
<div class="abs" style="left:1268px;top:73px;width:1px;height:615px;background:#9a9a9a"></div>
<div class="abs" style="left:1268px;top:73px;width:1px;height:42px;background:#7f8289"></div>
<div class="abs" style="left:326px;top:73px;width:1256px;height:1px;background:#7b8087"></div>
<div class="ev b" style="left:330px;top:118.25px"><div class="s" style="background:#fcfc38"></div><span class="tm" style="top:0.3px"><span style="display:inline-block;white-space:pre;font-size:10.6px;transform-origin:left center;transform:scaleX(0.946)">11:00 AM-01:00 PM</span></span><span class="ti" style="top:1.5px"><span style="display:inline-block;white-space:pre;font-size:10.3px;font-weight:bold;transform-origin:left center;transform:scaleX(1.001)">Rehearsal Romeo and Juliet</span></span><svg style="position:absolute;left:259px;top:0.5px" width="13" height="12" viewBox="0 0 13 12"><path d="M6.5 0.8 L12.4 11.2 H0.6 Z" fill="#e3b53a" stroke="#b8860b" stroke-width="0.8" stroke-linejoin="round"/><path d="M6.5 4 V7.8" stroke="#222" stroke-width="1.5"/><circle cx="6.5" cy="9.4" r="0.85" fill="#222"/></svg></div>
<div class="yl" style="left:442.5px;top:118.05px;width:142.5px"></div>
<div class="ev b" style="left:330px;top:133.25px"><div class="s" style="background:#fcfc38"></div><span class="tm" style="top:0.3px"><span style="display:inline-block;white-space:pre;font-size:10.6px;transform-origin:left center;transform:scaleX(0.946)">11:00 AM-01:00 PM</span></span><span class="ti" style="top:1.5px"><span style="display:inline-block;white-space:pre;font-size:10.3px;font-weight:bold;transform-origin:left center;transform:scaleX(1.001)">Rehearsal Romeo and Juliet</span></span><svg style="position:absolute;left:259px;top:0.5px" width="13" height="12" viewBox="0 0 13 12"><path d="M6.5 0.8 L12.4 11.2 H0.6 Z" fill="#e3b53a" stroke="#b8860b" stroke-width="0.8" stroke-linejoin="round"/><path d="M6.5 4 V7.8" stroke="#222" stroke-width="1.5"/><circle cx="6.5" cy="9.4" r="0.85" fill="#222"/></svg></div>
<div class="yl" style="left:442.5px;top:133.05px;width:142.5px"></div>
<div class="ev b" style="left:330px;top:188.75px"><div class="s" style="background:#fcfc38"></div><span class="tm" style="top:0.3px"><span style="display:inline-block;white-space:pre;font-size:10.6px;transform-origin:left center;transform:scaleX(0.946)">11:00 AM-01:00 PM</span></span><span class="ti" style="top:1.5px"><span style="display:inline-block;white-space:pre;font-size:10.3px;font-weight:bold;transform-origin:left center;transform:scaleX(1.001)">Rehearsal Romeo and Juliet</span></span><svg style="position:absolute;left:259px;top:0.5px" width="13" height="12" viewBox="0 0 13 12"><path d="M6.5 0.8 L12.4 11.2 H0.6 Z" fill="#e3b53a" stroke="#b8860b" stroke-width="0.8" stroke-linejoin="round"/><path d="M6.5 4 V7.8" stroke="#222" stroke-width="1.5"/><circle cx="6.5" cy="9.4" r="0.85" fill="#222"/></svg></div>
<div class="yl" style="left:442.5px;top:188.55px;width:142.5px"></div>
<div class="ev b" style="left:330px;top:203.75px"><div class="s" style="background:#fcfc38"></div><span class="tm" style="top:0.3px"><span style="display:inline-block;white-space:pre;font-size:10.6px;transform-origin:left center;transform:scaleX(0.946)">11:00 AM-01:00 PM</span></span><span class="ti" style="top:1.5px"><span style="display:inline-block;white-space:pre;font-size:10.3px;font-weight:bold;transform-origin:left center;transform:scaleX(1.001)">Rehearsal Romeo and Juliet</span></span><svg style="position:absolute;left:259px;top:0.5px" width="13" height="12" viewBox="0 0 13 12"><path d="M6.5 0.8 L12.4 11.2 H0.6 Z" fill="#e3b53a" stroke="#b8860b" stroke-width="0.8" stroke-linejoin="round"/><path d="M6.5 4 V7.8" stroke="#222" stroke-width="1.5"/><circle cx="6.5" cy="9.4" r="0.85" fill="#222"/></svg></div>
<div class="yl" style="left:442.5px;top:203.55px;width:142.5px"></div>
<div class="ev b" style="left:330px;top:314.75px"><div class="s" style="background:#fcfc38"></div><span class="tm" style="top:0.3px"><span style="display:inline-block;white-space:pre;font-size:10.6px;transform-origin:left center;transform:scaleX(0.946)">11:00 AM-01:00 PM</span></span><span class="ti" style="top:1.5px"><span style="display:inline-block;white-space:pre;font-size:10.3px;font-weight:bold;transform-origin:left center;transform:scaleX(1.001)">Rehearsal Romeo and Juliet</span></span><svg style="position:absolute;left:259px;top:0.5px" width="13" height="12" viewBox="0 0 13 12"><path d="M6.5 0.8 L12.4 11.2 H0.6 Z" fill="#e3b53a" stroke="#b8860b" stroke-width="0.8" stroke-linejoin="round"/><path d="M6.5 4 V7.8" stroke="#222" stroke-width="1.5"/><circle cx="6.5" cy="9.4" r="0.85" fill="#222"/></svg></div>
<div class="yl" style="left:442.5px;top:314.55px;width:142.5px"></div>
<div class="ev b" style="left:330px;top:329.75px"><div class="s" style="background:#fcfc38"></div><span class="tm" style="top:0.3px"><span style="display:inline-block;white-space:pre;font-size:10.6px;transform-origin:left center;transform:scaleX(0.946)">11:00 AM-01:00 PM</span></span><span class="ti" style="top:1.5px"><span style="display:inline-block;white-space:pre;font-size:10.3px;font-weight:bold;transform-origin:left center;transform:scaleX(1.001)">Rehearsal Romeo and Juliet</span></span><svg style="position:absolute;left:259px;top:0.5px" width="13" height="12" viewBox="0 0 13 12"><path d="M6.5 0.8 L12.4 11.2 H0.6 Z" fill="#e3b53a" stroke="#b8860b" stroke-width="0.8" stroke-linejoin="round"/><path d="M6.5 4 V7.8" stroke="#222" stroke-width="1.5"/><circle cx="6.5" cy="9.4" r="0.85" fill="#222"/></svg></div>
<div class="yl" style="left:442.5px;top:329.55px;width:142.5px"></div>
<div class="ev b" style="left:330px;top:259.75px"><div class="s" style="background:#fcfc38"></div><span class="tm" style="top:0.3px"><span style="display:inline-block;white-space:pre;font-size:10.6px;transform-origin:left center;transform:scaleX(0.946)">11:00 AM-01:00 PM</span></span><span class="ti" style="top:1.5px"><span style="display:inline-block;white-space:pre;font-size:10.3px;font-weight:bold;transform-origin:left center;transform:scaleX(1.001)">Rehearsal Romeo and Juliet</span></span></div>
<div class="yl" style="left:330px;top:259.10px;width:288.5px"></div>
<div class="ev b" style="left:330px;top:278.25px"><div class="s" style="background:#fcfc38"></div><span class="tm" style="top:0.3px"><span style="display:inline-block;white-space:pre;font-size:10.6px;transform-origin:left center;transform:scaleX(0.932)">02:00 PM-04:00 PM</span></span><span class="ti" style="top:1.5px"><span style="display:inline-block;white-space:pre;font-size:10.3px;font-weight:bold;transform-origin:left center;transform:scaleX(1.001)">Rehearsal Romeo and Juliet</span></span></div>
<div class="yl" style="left:330px;top:277.60px;width:288.5px"></div>
<div class="ev" style="left:330px;top:385.75px"><div class="s" style="background:#fcfc38"></div><span class="tm" style="top:0.3px"><span style="display:inline-block;white-space:pre;font-size:10.6px;transform-origin:left center;transform:scaleX(0.938)">09:30 AM-12:30 PM</span></span><span class="ti" style="top:1.5px"><span style="display:inline-block;white-space:pre;font-size:10.3px;transform-origin:left center;transform:scaleX(0.936)">Class Romeo and Juliet</span></span></div>
<div class="yl" style="left:330px;top:385.10px;width:288.5px"></div>
<div class="ev" style="left:330px;top:403.75px"><div class="s" style="background:#fcfc38"></div><span class="tm" style="top:0.3px"><span style="display:inline-block;white-space:pre;font-size:10.6px;transform-origin:left center;transform:scaleX(0.932)">04:00 PM-06:30 PM</span></span><span class="ti" style="top:1.5px"><span style="display:inline-block;white-space:pre;font-size:10.3px;transform-origin:left center;transform:scaleX(0.936)">Class Romeo and Juliet</span></span></div>
<div class="yl" style="left:330px;top:403.10px;width:288.5px"></div>
<div class="ev" style="left:330px;top:440.75px"><div class="s" style="background:#e9967a"></div><span class="tm" style="top:0.3px"><span style="display:inline-block;white-space:pre;font-size:10.6px;transform-origin:left center;transform:scaleX(0.938)">09:00 AM-01:00 PM</span></span><span class="ti" style="top:-0.1px"><span style="display:inline-block;white-space:pre;font-size:10.3px;transform-origin:left center;transform:scaleX(0.939)">Class Demo - Dance Classes and Rehearsals</span></span></div>
<div class="ev" style="left:330px;top:458.75px"><div class="s" style="background:#e9967a"></div><span class="tm" style="top:0.3px"><span style="display:inline-block;white-space:pre;font-size:10.6px;transform-origin:left center;transform:scaleX(0.932)">03:00 PM-07:00 PM</span></span><span class="ti" style="top:-0.1px"><span style="display:inline-block;white-space:pre;font-size:10.3px;transform-origin:left center;transform:scaleX(0.939)">Class Demo - Dance Classes and Rehearsals</span></span></div>
<div class="ev" style="left:330px;top:547.55px"><div class="s" style="background:#e9967a"></div><span class="tm" style="top:0.3px"><span style="display:inline-block;white-space:pre;font-size:10.6px;transform-origin:left center;transform:scaleX(0.946)">11:00 AM-03:00 PM</span></span><span class="ti" style="top:-0.1px"><span style="display:inline-block;white-space:pre;font-size:10.3px;transform-origin:left center;transform:scaleX(0.939)">Class Demo - Dance Classes and Rehearsals</span></span></div>
<div class="ev" style="left:330px;top:615.75px"><div class="s" style="background:#e9967a"></div><span class="tm" style="top:0.3px"><span style="display:inline-block;white-space:pre;font-size:10.6px;transform-origin:left center;transform:scaleX(0.932)">02:00 PM-06:00 PM</span></span><span class="ti" style="top:-0.1px"><span style="display:inline-block;white-space:pre;font-size:10.3px;transform-origin:left center;transform:scaleX(0.939)">Class Demo - Dance Classes and Rehearsals</span></span></div>
<div class="ev" style="left:330px;top:650.75px"><div class="s" style="background:#e9967a"></div><span class="tm" style="top:0.3px"><span style="display:inline-block;white-space:pre;font-size:10.6px;transform-origin:left center;transform:scaleX(0.938)">09:00 AM-01:00 PM</span></span><span class="ti" style="top:-0.1px"><span style="display:inline-block;white-space:pre;font-size:10.3px;transform-origin:left center;transform:scaleX(0.939)">Class Demo - Dance Classes and Rehearsals</span></span></div>
<div class="rb" style="left:643px;top:241.05px"></div>
<div class="ev b r" style="left:643px;top:241.35px"><div class="s" style="background:#fcfc38"></div><span class="tm" style="top:0.2px"><span style="display:inline-block;white-space:pre;font-size:10.6px;transform-origin:left center;transform:scaleX(0.932)">06:30 PM-09:00 PM</span></span><span class="ti" style="top:0.3px"><span style="display:inline-block;white-space:pre;font-size:10.3px;font-weight:bold;transform-origin:left center;transform:scaleX(1.011)">Mixed 11 Romeo and Juliet</span></span></div>
<div class="ev" style="left:643px;top:403.75px"><div class="s" style="background:#fcfc38"></div><span class="tm" style="top:0.3px"><span style="display:inline-block;white-space:pre;font-size:10.6px;transform-origin:left center;transform:scaleX(0.932)">01:30 PM-04:00 PM</span></span><span class="ti" style="top:1.5px"><span style="display:inline-block;white-space:pre;font-size:10.3px;transform-origin:left center;transform:scaleX(0.936)">Class Romeo and Juliet</span></span></div>
<div class="yl" style="left:643px;top:403.10px;width:288.5px"></div>
<div class="ev" style="left:643px;top:440.75px"><div class="s" style="background:#e9967a"></div><span class="tm" style="top:0.3px"><span style="display:inline-block;white-space:pre;font-size:10.6px;transform-origin:left center;transform:scaleX(0.938)">09:00 AM-01:55 PM</span></span><span class="ti" style="top:-0.1px"><span style="display:inline-block;white-space:pre;font-size:10.3px;transform-origin:left center;transform:scaleX(0.939)">Class Demo - Dance Classes and Rehearsals</span></span></div>
<div class="ev b" style="left:643px;top:458.75px"><div class="s" style="background:#e9967a"></div><span class="tm" style="top:0.3px"><span style="display:inline-block;white-space:pre;font-size:10.6px;transform-origin:left center;transform:scaleX(0.932)">02:00 PM-05:30 PM</span></span><span class="ti" style="top:-0.1px"><span style="display:inline-block;white-space:pre;font-size:10.3px;font-weight:bold;transform-origin:left center;transform:scaleX(0.988)">Rehearsal Demo - Dance Classes and Rehearsals</span></span></div>
<div class="ev" style="left:643px;top:547.55px"><div class="s" style="background:#e9967a"></div><span class="tm" style="top:0.3px"><span style="display:inline-block;white-space:pre;font-size:10.6px;transform-origin:left center;transform:scaleX(0.938)">09:00 AM-01:00 PM</span></span><span class="ti" style="top:-0.1px"><span style="display:inline-block;white-space:pre;font-size:10.3px;transform-origin:left center;transform:scaleX(0.939)">Class Demo - Dance Classes and Rehearsals</span></span></div>
<div class="ev" style="left:643px;top:669.25px"><div class="s" style="background:#e9967a"></div><span class="tm" style="top:0.3px"><span style="display:inline-block;white-space:pre;font-size:10.6px;transform-origin:left center;transform:scaleX(0.932)">02:00 PM-06:00 PM</span></span><span class="ti" style="top:-0.1px"><span style="display:inline-block;white-space:pre;font-size:10.3px;transform-origin:left center;transform:scaleX(0.939)">Class Demo - Dance Classes and Rehearsals</span></span></div>
<div class="ev b" style="left:957px;top:151.75px"><div class="s" style="background:#fcfc38"></div><span class="tm" style="top:0.3px"><span style="display:inline-block;white-space:pre;font-size:10.6px;transform-origin:left center;transform:scaleX(0.932)">04:00 PM-06:30 PM</span></span><span class="ti" style="top:1.5px"><span style="display:inline-block;white-space:pre;font-size:10.3px;font-weight:bold;transform-origin:left center;transform:scaleX(1.001)">Rehearsal Romeo and Juliet</span></span></div>
<div class="yl" style="left:957px;top:151.10px;width:288.5px"></div>
<div class="rb" style="left:957px;top:170.05px"></div>
<div class="ev b r" style="left:957px;top:170.35px"><div class="s" style="background:#fcfc38"></div><span class="tm" style="top:0.2px"><span style="display:inline-block;white-space:pre;font-size:10.6px;transform-origin:left center;transform:scaleX(0.932)">07:30 PM-09:45 PM</span></span><span class="ti" style="top:0.3px"><span style="display:inline-block;white-space:pre;font-size:10.3px;font-weight:bold;transform-origin:left center;transform:scaleX(0.968)">PERF 83 Romeo and Juliet</span></span></div>
<div class="rb" style="left:957px;top:188.45px"></div>
<div class="ev b r" style="left:957px;top:188.75px"><div class="s" style="background:#fcfc38"></div><span class="tm" style="top:0.2px"><span style="display:inline-block;white-space:pre;font-size:10.6px;transform-origin:left center;transform:scaleX(0.938)">10:00 AM-12:15 PM</span></span><span class="ti" style="top:0.3px"><span style="display:inline-block;white-space:pre;font-size:10.3px;font-weight:bold;transform-origin:left center;transform:scaleX(0.968)">PERF 84 Romeo and Juliet</span></span></div>
<div class="ev b" style="left:957px;top:222.25px"><div class="s" style="background:#fcfc38"></div><span class="tm" style="top:0.3px"><span style="display:inline-block;white-space:pre;font-size:10.6px;transform-origin:left center;transform:scaleX(0.932)">01:00 PM-03:30 PM</span></span><span class="ti" style="top:1.5px"><span style="display:inline-block;white-space:pre;font-size:10.3px;font-weight:bold;transform-origin:left center;transform:scaleX(1.001)">Rehearsal Romeo and Juliet</span></span></div>
<div class="yl" style="left:957px;top:221.60px;width:288.5px"></div>
<div class="ev b" style="left:957px;top:277.75px"><div class="s" style="background:#fcfc38"></div><span class="tm" style="top:0.3px"><span style="display:inline-block;white-space:pre;font-size:10.6px;transform-origin:left center;transform:scaleX(0.932)">04:00 PM-06:30 PM</span></span><span class="ti" style="top:1.5px"><span style="display:inline-block;white-space:pre;font-size:10.3px;font-weight:bold;transform-origin:left center;transform:scaleX(1.001)">Rehearsal Romeo and Juliet</span></span></div>
<div class="yl" style="left:957px;top:277.10px;width:288.5px"></div>
<div class="ev b" style="left:957px;top:348.25px"><div class="s" style="background:#fcfc38"></div><span class="tm" style="top:0.3px"><span style="display:inline-block;white-space:pre;font-size:10.6px;transform-origin:left center;transform:scaleX(0.932)">04:00 PM-06:30 PM</span></span><span class="ti" style="top:1.5px"><span style="display:inline-block;white-space:pre;font-size:10.3px;font-weight:bold;transform-origin:left center;transform:scaleX(1.001)">Rehearsal Romeo and Juliet</span></span></div>
<div class="yl" style="left:957px;top:347.60px;width:288.5px"></div>
<div class="rb" style="left:957px;top:403.45px"></div>
<div class="ev b r" style="left:957px;top:403.75px"><div class="s" style="background:#fcfc38"></div><span class="tm" style="top:0.2px"><span style="display:inline-block;white-space:pre;font-size:10.6px;transform-origin:left center;transform:scaleX(0.932)">03:45 PM-06:00 PM</span></span><span class="ti" style="top:0.3px"><span style="display:inline-block;white-space:pre;font-size:10.3px;font-weight:bold;transform-origin:left center;transform:scaleX(0.968)">PERF 85 Romeo and Juliet</span></span></div>
<div class="rb" style="left:957px;top:458.45px"></div>
<div class="ev b r" style="left:957px;top:458.75px"><div class="s" style="background:#fcfc38"></div><span class="tm" style="top:0.2px"><span style="display:inline-block;white-space:pre;font-size:10.6px;transform-origin:left center;transform:scaleX(0.932)">01:45 PM-04:45 PM</span></span><span class="ti" style="top:1.9000000000000001px"><span style="display:inline-block;white-space:pre;font-size:10.3px;font-weight:bold;transform-origin:left center;transform:scaleX(0.968)">PERF 86 Romeo and Juliet</span></span></div>
<div class="yl" style="left:957px;top:458.10px;width:288.5px;height:1.15px"></div>
<div class="rb" style="left:957px;top:477.45px"></div>
<div class="ev b r" style="left:957px;top:477.75px"><div class="s" style="background:#fcfc38"></div><span class="tm" style="top:0.2px"><span style="display:inline-block;white-space:pre;font-size:10.6px;transform-origin:left center;transform:scaleX(0.940)">09:30 PM-11:45 PM</span></span><span class="ti" style="top:0.3px"><span style="display:inline-block;white-space:pre;font-size:10.3px;font-weight:bold;transform-origin:left center;transform:scaleX(0.968)">PERF 87 Romeo and Juliet</span></span></div>
<div class="ev b" style="left:1271px;top:240.75px"><div class="s" style="background:#add8e6"></div><span class="tm" style="top:0.3px"><span style="display:inline-block;white-space:pre;font-size:10.6px;transform-origin:left center;transform:scaleX(0.932)">06:00 PM-07:30 PM</span></span><span class="ti" style="top:-0.1px"><span style="display:inline-block;white-space:pre;font-size:10.3px;font-weight:bold;transform-origin:left center;transform:scaleX(1.001)">WS-EDU 1 The Writers&#x27; Academy at</span></span></div>
<div class="rb" style="left:1271px;top:384.95px"></div>
<div class="ev b r" style="left:1271px;top:385.25px"><div class="s" style="background:#82aa46"></div><span class="tm" style="top:0.2px"><span style="display:inline-block;white-space:pre;font-size:10.6px;transform-origin:left center;transform:scaleX(0.952)">08:30 AM-11:30 AM</span></span><span class="ti" style="top:1.9000000000000001px"><span style="display:inline-block;white-space:pre;font-size:10.3px;font-weight:bold;transform-origin:left center;transform:scaleX(0.958)">PERF 2 Top Gun Live</span></span></div>
<div class="yl" style="left:1271px;top:384.60px;width:288.5px;height:1.15px"></div>
<div class="ev b" style="left:1271px;top:403.75px"><div class="s" style="background:#add8e6"></div><span class="tm" style="top:0.3px"><span style="display:inline-block;white-space:pre;font-size:10.6px;transform-origin:left center;transform:scaleX(0.932)">01:30 PM-03:00 PM</span></span><span class="ti" style="top:-0.1px"><span style="display:inline-block;white-space:pre;font-size:10.3px;font-weight:bold;transform-origin:left center;transform:scaleX(1.001)">WS-EDU 2 The Writers&#x27; Academy at</span></span></div>
<div class="rb" style="left:1271px;top:421.45px"></div>
<div class="ev b r" style="left:1271px;top:421.75px"><div class="s" style="background:#82aa46"></div><span class="tm" style="top:0.2px"><span style="display:inline-block;white-space:pre;font-size:10.6px;transform-origin:left center;transform:scaleX(0.940)">07:30 PM-11:00 PM</span></span><span class="ti" style="top:1.9000000000000001px"><span style="display:inline-block;white-space:pre;font-size:10.3px;font-weight:bold;transform-origin:left center;transform:scaleX(0.958)">PERF 3 Top Gun Live</span></span></div>
<div class="yl" style="left:1271px;top:421.10px;width:288.5px;height:1.15px"></div>
<div class="ev b" style="left:1271px;top:615.75px"><div class="s" style="background:#add8e6"></div><span class="tm" style="top:0.3px"><span style="display:inline-block;white-space:pre;font-size:10.6px;transform-origin:left center;transform:scaleX(0.932)">01:30 PM-03:00 PM</span></span><span class="ti" style="top:-0.1px"><span style="display:inline-block;white-space:pre;font-size:10.3px;font-weight:bold;transform-origin:left center;transform:scaleX(1.001)">WS-EDU 3 The Writers&#x27; Academy at</span></span></div>
<div class="abs" style="left:1543.2px;top:160px;width:40px;height:111.3px;background:rgba(104,114,136,0.88);border-radius:3px 0 0 3px"></div>
<div class="abs" style="left:1563px;top:215.5px;width:0;height:0"><div style="position:absolute;left:-40px;top:-9px;width:80px;height:18px;line-height:18px;text-align:center;color:#fff;font-size:14.2px;-webkit-text-stroke:0.35px #fff;transform:rotate(-90deg);white-space:nowrap">Indicators</div></div>
</body></html>
